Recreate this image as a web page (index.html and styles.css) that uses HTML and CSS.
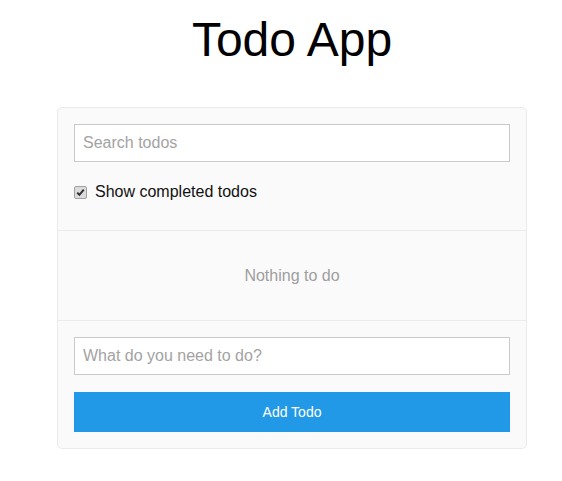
FILE: index.html
```html
<!DOCTYPE html>
<html lang="en">
<head>
<meta charset="utf-8">
<title>Todo App</title>
<link rel="stylesheet" href="styles.css">
</head>
<body>
<div class="page">
  <h1 class="title">Todo App</h1>
  <div class="card">
    <div class="section search-section">
      <input class="text-input" type="text" placeholder="Search todos">
      <label class="toggle">
        <input class="check" type="checkbox" checked>
        <span>Show completed todos</span>
      </label>
    </div>
    <div class="section empty-section">
      <p class="empty">Nothing to do</p>
    </div>
    <div class="section add-section">
      <input class="text-input" type="text" placeholder="What do you need to do?">
      <button class="add-btn" type="button">Add Todo</button>
    </div>
  </div>
</div>
</body>
</html>
```

FILE: styles.css
```css
html, body {
  margin: 0;
  padding: 0;
  background: #ffffff;
  overflow: hidden;
}

body {
  font-family: "Liberation Sans", Arial, sans-serif;
  color: #111;
}

.page {
  width: 584px;
  padding-top: 12px;
}

.title {
  margin: 0 0 39px;
  font-size: 48px;
  line-height: 56px;
  font-weight: normal;
  text-align: center;
  color: #000;
}

.card {
  width: 470px;
  box-sizing: border-box;
  margin: 0 auto;
  background: #fafafa;
  border: 1px solid #ebebeb;
  border-radius: 5px;
}

.section {
  padding: 16px;
  display: flex;
  flex-direction: column;
}

.search-section {
  padding-bottom: 24px;
  border-bottom: 1px solid #ebebeb;
}

.text-input {
  box-sizing: border-box;
  height: 38px;
  width: 100%;
  margin: 0;
  padding: 0 8px;
  border: 1px solid #c9c9c9;
  background: #fff;
  font-family: "Liberation Sans", Arial, sans-serif;
  font-size: 16px;
  color: #222;
  outline: none;
}

.text-input::placeholder {
  color: #a3a3a3;
}

.toggle {
  display: flex;
  align-items: center;
  height: 28px;
  margin-top: 16px;
  font-size: 16px;
  color: #111;
}

.check {
  appearance: none;
  -webkit-appearance: none;
  width: 13px;
  height: 13px;
  margin: 0 8px 0 0;
  box-sizing: border-box;
  border: 1px solid #a0a0a0;
  border-radius: 2px;
  background-color: #dcdcdc;
  background-repeat: no-repeat;
  background-position: center;
  background-size: 11px 11px;
}

.check:checked {
  background-image: url("data:image/svg+xml;utf8,<svg xmlns='http://www.w3.org/2000/svg' viewBox='0 0 11 11'><path d='M2.2 5.6 L4.4 7.8 L8.8 2.6' fill='none' stroke='%23333' stroke-width='2'/></svg>");
}

.empty-section {
  padding: 35px 16px;
  border-bottom: 1px solid #ebebeb;
}

.empty {
  margin: 0;
  font-size: 16px;
  line-height: 19px;
  text-align: center;
  color: #9e9e9e;
}

.add-btn {
  margin-top: 17px;
  height: 40px;
  width: 100%;
  border: none;
  background: #2199e6;
  color: #fff;
  font-family: "Liberation Sans", Arial, sans-serif;
  font-size: 14px;
}
```
